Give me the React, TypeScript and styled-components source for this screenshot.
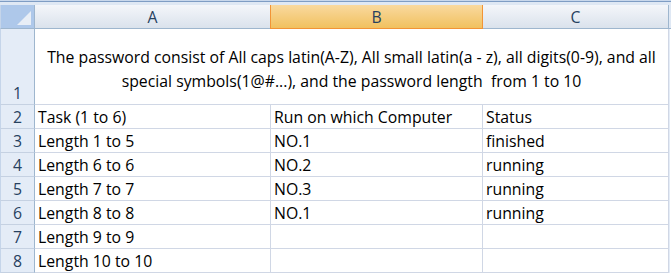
import React from "react";
import styled, { createGlobalStyle } from "styled-components";

const C = {
  grid: "#d0d7e5",
  headBorder: "#9eb6ce",
  headText: "#27415f",
  rowHead: "#e4ecf7",
  selTop: "#f9d99f",
  selBottom: "#f1c15f",
  selBorder: "#f29436",
  text: "#000",
};

const GlobalStyle = createGlobalStyle`
  html, body {
    margin: 0;
    padding: 0;
    background: #ffffff;
  }
  body {
    width: 671px;
    height: 274px;
    overflow: hidden;
    font-family: "Open Sans", Lato, sans-serif;
    font-size: 15.8px;
    color: ${C.text};
  }
`;

const Sheet = styled.div`
  width: 671px;
  height: 274px;
  display: grid;
  grid-template-columns: 35px 236px 212px 186px 2px;
  grid-template-rows: 5px 24px 76px repeat(7, 24px) 1px;
  background: #fff;
`;

const TopBand = styled.div`
  grid-column: 1 / -1;
  background: linear-gradient(#c9d8ec 0, #c9d8ec 1px, #7f9dc4 1px, #7f9dc4 2px, #dfe8f4 2px);
`;

const Corner = styled.div`
  position: relative;
  background: #aec8ea;
  border-right: 1px solid ${C.headBorder};
  border-bottom: 1px solid ${C.headBorder};
  border-left: 1px solid #c5d5ea;
  box-sizing: border-box;
`;

const CornerTri = styled.div`
  position: absolute;
  right: 3px;
  bottom: 3px;
  width: 0;
  height: 0;
  border-left: 14px solid transparent;
  border-bottom: 14px solid #e8eef6;
`;

const ColHead = styled.div<{ $sel?: boolean }>`
  display: flex;
  align-items: center;
  justify-content: center;
  box-sizing: border-box;
  color: ${C.headText};
  padding-top: 1px;
  background: ${(p) =>
    p.$sel
      ? `linear-gradient(${C.selTop}, ${C.selBottom})`
      : "linear-gradient(#f4f6fa, #dae2ec)"};
  border-right: 1px solid ${(p) => (p.$sel ? C.selBorder : C.headBorder)};
  border-left: ${(p) => (p.$sel ? `1px solid ${C.selBorder}` : "none")};
  border-bottom: 1px solid ${(p) => (p.$sel ? C.selBorder : C.headBorder)};
  margin-left: ${(p) => (p.$sel ? "-1px" : "0")};
`;

const EdgeHead = styled.div`
  background: #dfe8f4;
  border-bottom: 1px solid ${C.headBorder};
`;

const RowHead = styled.div`
  display: flex;
  align-items: flex-end;
  justify-content: center;
  box-sizing: border-box;
  padding-bottom: 0;
  line-height: 22px;
  color: ${C.headText};
  background: ${C.rowHead};
  border-right: 1px solid ${C.headBorder};
  border-bottom: 1px solid #c5d1e2;
  border-left: 1px solid #c5d5ea;
`;

const Cell = styled.div`
  display: flex;
  align-items: flex-end;
  box-sizing: border-box;
  padding: 0 0 0 3px;
  line-height: 22px;
  white-space: nowrap;
  border-right: 1px solid ${C.grid};
  border-bottom: 1px solid ${C.grid};
`;

const Merged = styled.div`
  grid-column: 2 / 5;
  display: flex;
  align-items: center;
  justify-content: center;
  text-align: center;
  box-sizing: border-box;
  padding: 4px 0 0;
  line-height: 24px;
  white-space: nowrap;
  border-right: 1px solid ${C.grid};
  border-bottom: 1px solid ${C.grid};
`;

const Edge = styled.div`
  background: #fff;
  border-left: 1px solid #e4ecf7;
`;

const rows = [
  ["Task (1 to 6)", "Run on which Computer", "Status"],
  ["Length 1 to 5", "NO.1", "finished"],
  ["Length 6 to 6", "NO.2", "running"],
  ["Length 7 to 7", "NO.3", "running"],
  ["Length 8 to 8", "NO.1", "running"],
  ["Length 9 to 9", "", ""],
  ["Length 10 to 10", "", ""],
];

export default function App() {
  return (
    <>
      <GlobalStyle />
      <Sheet>
        <TopBand />
        <Corner>
          <CornerTri />
        </Corner>
        <ColHead>A</ColHead>
        <ColHead $sel>B</ColHead>
        <ColHead>C</ColHead>
        <EdgeHead />

        <RowHead>1</RowHead>
        <Merged>
          The password consist of All caps latin(A-Z), All small latin(a - z), all digits(0-9), and all
          <br />
          special symbols(1@#...), and the password length&nbsp; from 1 to 10
        </Merged>
        <Edge />

        {rows.map((r, i) => (
          <React.Fragment key={i}>
            <RowHead>{i + 2}</RowHead>
            {r.map((v, j) => (
              <Cell key={j}>{v}</Cell>
            ))}
            <Edge />
          </React.Fragment>
        ))}
      </Sheet>
    </>
  );
}
